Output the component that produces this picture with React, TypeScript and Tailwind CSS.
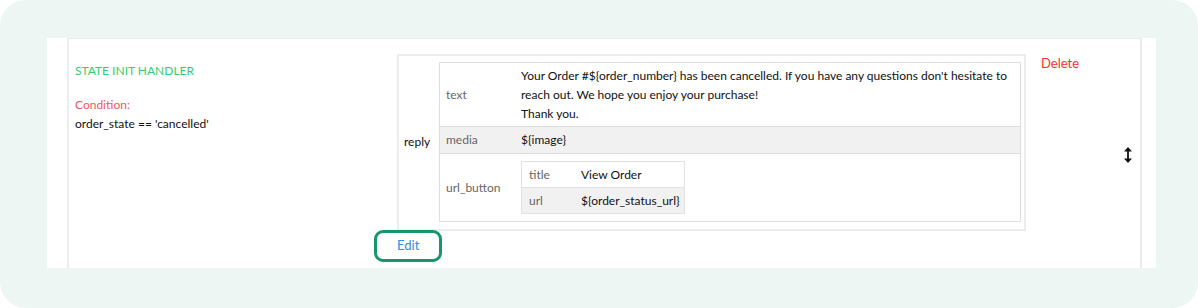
import React from "react";

function UpDownArrow() {
  return (
    <svg width="10" height="18" viewBox="0 0 10 18" fill="none">
      <line x1="5" y1="3" x2="5" y2="15" stroke="#111" strokeWidth="1.8" />
      <path d="M1 5.5 L5 1 L9 5.5 Z" fill="#111" />
      <path d="M1 12.5 L5 17 L9 12.5 Z" fill="#111" />
    </svg>
  );
}

export default function App() {
  return (
    <div
      className="w-[1198px] h-[308px] bg-white text-[12px] text-[#1a1a1a]"
      style={{ fontFamily: "Lato, 'Open Sans', sans-serif" }}
    >
      <div className="h-full rounded-[26px] bg-[#edf6f2] pt-[38px] pb-[40px] pl-[47px] pr-[42px]">
        <div className="h-full bg-white pl-[20px] pr-[14px]">
          <div className="h-full border-x-2 border-t border-[#ececec] flex">
            {/* left column */}
            <div className="w-[328px] shrink-0 pl-[6px] pt-[24px]">
              <div className="text-[#2fd06f] leading-[16px]">STATE INIT HANDLER</div>
              <div className="mt-[16px] text-[#f2585c] leading-[19px]">Condition:</div>
              <div className="leading-[19px] text-[#111]">order_state == 'cancelled'</div>
            </div>

            {/* reply column */}
            <div className="w-[629px] shrink-0 pt-[15px]">
              <div className="border-2 border-[#ececec] flex items-center pt-[6px] pr-[3px] pb-[7px]">
                <div className="w-[40px] shrink-0 pl-[5px] text-[#111]">reply</div>
                <div className="flex-1 border border-[#dedede]">
                  <div className="flex items-center border-b border-[#dedede] py-[3px]">
                    <div className="w-[81px] shrink-0 pl-[6px] text-[#666]">text</div>
                    <div className="flex-1 leading-[19px] text-[#111]">
                      Your Order #${"{order_number}"} has been cancelled. If you have any questions don't hesitate to reach out. We hope you enjoy your purchase!
                      <br />
                      Thank you.
                    </div>
                  </div>
                  <div className="flex items-center h-[27px] border-b border-[#dedede] bg-[#f1f1f1]">
                    <div className="w-[81px] shrink-0 pl-[6px] text-[#666]">media</div>
                    <div className="flex-1 text-[#111]">${"{image}"}</div>
                  </div>
                  <div className="flex items-center py-[7px]">
                    <div className="w-[81px] shrink-0 pl-[6px] text-[#666]">url_button</div>
                    <div className="w-[164px] border border-[#e2e2e2]">
                      <div className="flex items-center h-[26px] border-b border-[#e2e2e2]">
                        <div className="w-[59px] shrink-0 pl-[7px] text-[#666]">title</div>
                        <div className="text-[#111]">View Order</div>
                      </div>
                      <div className="flex items-center h-[25px] bg-[#f1f1f1]">
                        <div className="w-[59px] shrink-0 pl-[7px] text-[#666]">url</div>
                        <div className="text-[#111] whitespace-nowrap">${"{order_status_url}"}</div>
                      </div>
                    </div>
                  </div>
                </div>
              </div>
              <div className="-mt-px">
                <span className="inline-flex items-center h-[32px] ml-[-23px] px-[20px] border-[3px] border-[#17966c] rounded-[9px] text-[#2a8ff0] text-[13px]">
                  Edit
                </span>
              </div>
            </div>

            {/* right column */}
            <div className="flex-1 flex flex-col pl-[15px] pt-[16px]">
              <div className="text-[#ff2d2d] leading-[16px] text-[13px]">Delete</div>
              <div className="mt-[75px] pl-[82px]">
                <UpDownArrow />
              </div>
            </div>
          </div>
        </div>
      </div>
    </div>
  );
}
